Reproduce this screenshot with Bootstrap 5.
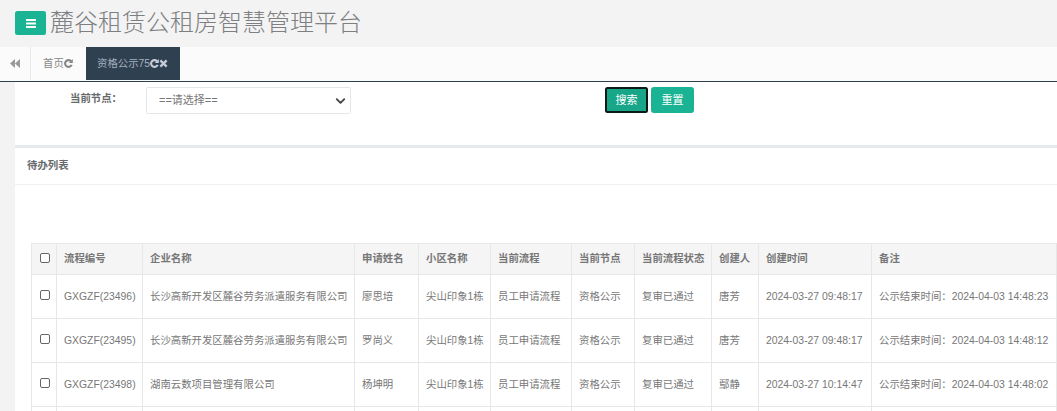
<!DOCTYPE html>
<html lang="zh">
<head>
<meta charset="utf-8">
<title>麓谷租赁公租房智慧管理平台</title>
<link href="https://cdn.jsdelivr.net/npm/bootstrap@5.3.0/dist/css/bootstrap.min.css" rel="stylesheet">
<style>
html,body{height:411px;overflow:hidden;}
body{background:#f3f3f4;color:#777;font-family:"Liberation Sans","Noto Sans CJK SC",sans-serif;font-size:10.4px;}
.top-head{height:47px;padding:8px 0 0 15px;gap:4px;}
.menu-btn{width:31px;height:24px;background:#1ab394;border-radius:2.5px;margin-top:3px;}
.app-title{font-size:24px;line-height:30px;font-weight:300;margin:0;color:#7d7f81;}
.tab-strip{height:35px;background:#fbfbfb;border-bottom:1px solid #2f4050;}
.tab-back{width:31px;height:33px;border-right:1px solid #e7eaec;color:#999;}
.tab-item{height:33px;padding:0 12px;gap:0;color:#888;white-space:nowrap;}
.tab-home{width:55px;}
.tab-active{width:94px;padding-left:11px;background:#2f4050;color:#a7b1c2;}
.page-body{margin-left:15px;background:#fff;height:330px;overflow:hidden;}
.search-zone{height:63px;padding-top:5px;}
.field-label{width:131px;padding:1px 0 0 55px;font-weight:700;margin:0;line-height:22px;font-size:10.4px;color:#676a6c;}
.field-select{width:205px;height:27px;font-size:11px;color:#777;padding:0 12px;border-radius:1.5px;border-color:#e5e6e7;background-size:13px 10px;background-position:right 3px center;background-image:url("data:image/svg+xml,%3csvg xmlns='http://www.w3.org/2000/svg' viewBox='0 0 16 16'%3e%3cpath fill='none' stroke='%23444' stroke-linecap='round' stroke-linejoin='round' stroke-width='3' d='m2 5 6 6 6-6'/%3e%3c/svg%3e");}
.btn-zone{margin-left:254px;gap:3px;}
.act-btn{height:26px;width:43px;padding:0;background:#1ab394;border:1px solid #1ab394;color:#fff;font-size:11px;border-radius:2.5px;font-weight:400;}
.act-focus{background:#18a689;border:2px solid #0c1a17;width:43px;}
.panel-sep{border-top:3px solid #e7eaec;}
.panel-head{height:37px;padding:0 12px;border-bottom:1px solid #eef0f1;font-weight:700;color:#676a6c;line-height:36px;}
.panel-main{padding:58px 0 0 16px;}
.flow-table{table-layout:fixed;width:1025px;margin:0;border-collapse:collapse;font-size:10.4px;color:#777;--bs-table-color:#777;--bs-table-border-color:#e7e7e7;}
.flow-table>*>tr>*{padding:0 7px;vertical-align:middle;border:1px solid #e7e7e7;white-space:nowrap;overflow:hidden;font-weight:400;}
.flow-table thead th{background:#f5f5f6;height:31px;font-weight:700;color:#777;}
.flow-table tbody td{height:44px;}
.flow-table .form-check-input{width:10px;height:10px;margin:-3px 0 0;border-color:#666;border-radius:2px;display:block;}
.flow-table .chk-cell{padding:0 0 0 8px;}
.tick-icon{width:9px;height:9px;flex:none;}
</style>
</head>
<body>
<header class="top-head d-flex align-items-start">
  <button type="button" class="menu-btn btn p-0 d-flex align-items-center justify-content-center border-0" aria-label="菜单">
    <svg width="10" height="9" viewBox="0 0 10 9"><path fill="#fff" d="M0 0h10v2H0zM0 3.500h10v2H0zM0 7h10v2H0z"/></svg>
  </button>
  <h1 class="app-title">麓谷租赁公租房智慧管理平台</h1>
</header>
<nav class="tab-strip d-flex align-items-start">
  <div class="tab-back d-flex align-items-center justify-content-center">
    <svg width="10" height="9" viewBox="0 0 9 8"><path fill="#999" d="M4.500 0v8L0 4zM9 0v8L4.500 4z"/></svg>
  </div>
  <div class="tab-item tab-home d-flex align-items-center">首页
    <svg class="tick-icon" viewBox="0 0 10 10"><path fill="none" stroke="#888" stroke-width="2.400" d="M8.500 6.500A3.800 3.800 0 1 1 8 2.600"/><path fill="#888" d="M9.800 0v4.400H5.400z"/></svg>
  </div>
  <div class="tab-item tab-active d-flex align-items-center">资格公示75
    <svg class="tick-icon" viewBox="0 0 10 10"><path fill="none" stroke="#c3cbd8" stroke-width="2.400" d="M8.500 6.500A3.800 3.800 0 1 1 8 2.600"/><path fill="#c3cbd8" d="M9.800 0v4.400H5.400z"/></svg>
    <svg class="tick-icon" viewBox="0 0 10 10"><path stroke="#c3cbd8" stroke-width="2.600" d="M1.500 1.500l7 7M8.500 1.500l-7 7"/></svg>
  </div>
</nav>
<main class="page-body">
  <form class="search-zone d-flex align-items-start">
    <label class="field-label" for="nodeSel">当前节点：</label>
    <select id="nodeSel" class="form-select field-select"><option>==请选择==</option></select>
    <div class="btn-zone d-flex">
      <button type="button" class="btn act-btn act-focus">搜索</button>
      <button type="button" class="btn act-btn">重置</button>
    </div>
  </form>
  <section class="panel-sep">
    <div class="panel-head">待办列表</div>
    <div class="panel-main">
      <table class="table flow-table">
        <colgroup>
          <col style="width:25px"><col style="width:86px"><col style="width:212px"><col style="width:64px"><col style="width:72px"><col style="width:81px"><col style="width:63px"><col style="width:77px"><col style="width:47px"><col style="width:113px"><col style="width:185px">
        </colgroup>
        <thead>
          <tr><th class="chk-cell"><input class="form-check-input" type="checkbox" aria-label="全选"></th><th>流程编号</th><th>企业名称</th><th>申请姓名</th><th>小区名称</th><th>当前流程</th><th>当前节点</th><th>当前流程状态</th><th>创建人</th><th>创建时间</th><th>备注</th></tr>
        </thead>
        <tbody>
          <tr><td class="chk-cell"><input class="form-check-input" type="checkbox" aria-label="选择"></td><td>GXGZF(23496)</td><td>长沙高新开发区麓谷劳务派遣服务有限公司</td><td>廖思培</td><td>尖山印象1栋</td><td>员工申请流程</td><td>资格公示</td><td>复审已通过</td><td>唐芳</td><td>2024-03-27 09:48:17</td><td>公示结束时间：2024-04-03 14:48:23</td></tr>
          <tr><td class="chk-cell"><input class="form-check-input" type="checkbox" aria-label="选择"></td><td>GXGZF(23495)</td><td>长沙高新开发区麓谷劳务派遣服务有限公司</td><td>罗尚义</td><td>尖山印象1栋</td><td>员工申请流程</td><td>资格公示</td><td>复审已通过</td><td>唐芳</td><td>2024-03-27 09:48:17</td><td>公示结束时间：2024-04-03 14:48:12</td></tr>
          <tr><td class="chk-cell"><input class="form-check-input" type="checkbox" aria-label="选择"></td><td>GXGZF(23498)</td><td>湖南云数项目管理有限公司</td><td>杨坤明</td><td>尖山印象1栋</td><td>员工申请流程</td><td>资格公示</td><td>复审已通过</td><td>鄢静</td><td>2024-03-27 10:14:47</td><td>公示结束时间：2024-04-03 14:48:02</td></tr>
          <tr><td class="chk-cell"></td><td></td><td></td><td></td><td></td><td></td><td></td><td></td><td></td><td></td><td></td></tr>
        </tbody>
      </table>
    </div>
  </section>
</main>
<script src="https://cdn.jsdelivr.net/npm/bootstrap@5.3.0/dist/js/bootstrap.bundle.min.js"></script>
</body>
</html>
